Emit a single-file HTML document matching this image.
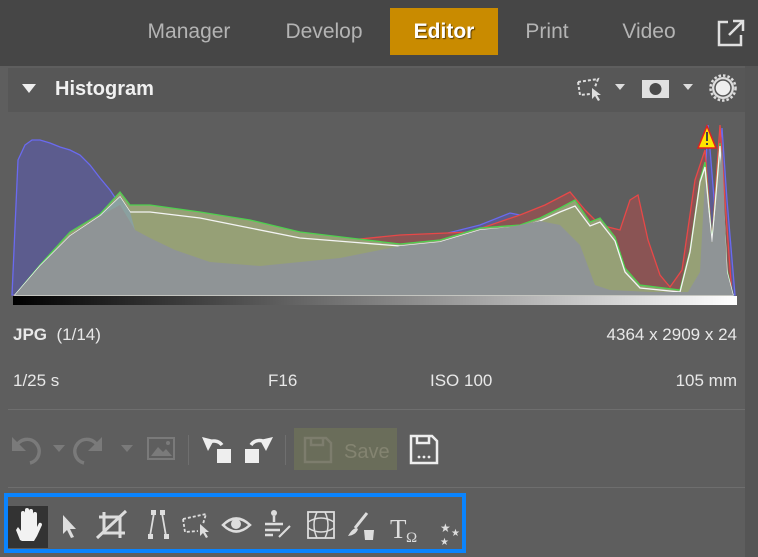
<!DOCTYPE html>
<html><head><meta charset="utf-8"><style>
*{margin:0;padding:0;box-sizing:border-box}
body{width:758px;height:557px;overflow:hidden;background:#5e5e5e;font-family:"Liberation Sans",sans-serif;position:relative;color:#e6e6e6}
.abs{position:absolute}
.top{left:0;top:0;width:758px;height:66px;background:#464646}
.tab{position:absolute;top:8px;height:47px;line-height:47px;font-size:21px;color:#b4b4b4;text-align:center}
.hdr{left:8px;top:68px;width:737px;height:44px;background:#575757}
.txt{font-size:17px;color:#e8e8e8;position:absolute}
</style></head><body>
<div class="abs top"></div>
<div class="tab" style="left:140px;width:98px">Manager</div>
<div class="tab" style="left:279px;width:90px">Develop</div>
<div class="tab" style="left:390px;width:108px;background:#c98b00;color:#fff;font-weight:bold;text-shadow:1px 1px 1px #5a3c00">Editor</div>
<div class="tab" style="left:518px;width:58px">Print</div>
<div class="tab" style="left:615px;width:68px">Video</div>
<svg class="abs" style="left:716px;top:18px" width="30" height="30" viewBox="0 0 30 30" fill="none" stroke="#e0e0e0" stroke-width="2.5"><path d="M12 4H3V27H25V17"/><path d="M13 17L26 4M17 3H27V13"/></svg>
<div class="abs" style="left:745px;top:66px;width:13px;height:491px;background:#555"></div>
<div class="abs hdr"></div>
<svg class="abs" style="left:22px;top:84px" width="14" height="10"><path d="M0 0H14L7 9Z" fill="#eee"/></svg>
<div class="abs" style="left:55px;top:78px;font-size:20px;font-weight:bold;color:#f0f0f0">Histogram</div>
<svg class="abs" style="left:575px;top:74px" width="165" height="30" viewBox="0 0 165 30" fill="none">
<path d="M3 8L23 5L20 13M3 8L5 21L15 20" stroke="#ddd" stroke-width="2" stroke-dasharray="3 2"/>
<path d="M17 14L17 25L20 22L23 27L25 26L22 21L26 21Z" fill="#ddd"/>
<path d="M40 10H50L45 16Z" fill="#ddd"/>
<rect x="67" y="6" width="27" height="18" fill="#e0e0e0"/><circle cx="80.5" cy="15" r="6" fill="#4a4a4a"/>
<path d="M108 10H118L113 16Z" fill="#ddd"/>
<circle cx="148" cy="14" r="11" fill="#ddd"/><circle cx="148" cy="14" r="12.5" stroke="#ddd" stroke-width="2.5" stroke-dasharray="2.5 2"/><circle cx="148" cy="14" r="8" fill="#eee" stroke="#555" stroke-width="1.5"/>
</svg>
<svg class="abs" style="left:0;top:110px" width="745" height="200" viewBox="0 110 745 200">
<rect x="8" y="112" width="737" height="194" fill="#5e5e5e"/>
<path d="M12 295L18 160L25 145L32 140L40 140L50 143L60 147L70 150L80 155L90 165L100 178L110 190L120 205L135 230L150 238L175 250L210 262L260 266L300 262L340 258L400 245L440 235L480 225L510 213L520 215L545 218L565 232L580 245L595 285L610 290L650 292L690 292L700 270L708 125L715 210L722 128L727 200L735 295Z" fill="#5c5c8e" stroke="#6a6af0" stroke-width="1.3"/>
<path d="M15 295L50 265L100 225L130 210L150 225L200 235L250 240L300 245L400 235L470 232L520 215L545 205L570 192L585 210L600 225L620 230L630 200L638 195L648 240L660 275L670 287L682 270L695 180L705 150L712 240L720 125L725 200L732 295Z" fill="#8a5454" stroke="#e84848" stroke-width="1.3"/>
<path d="M15 295L40 265L70 232L100 214L120 192L130 205L150 205L200 212L250 220L300 232L350 238L400 244L440 240L480 228L520 225L540 218L560 208L575 200L590 222L600 218L615 237L625 268L640 285L680 290L690 250L700 180L705 162L712 240L720 143L727 270L733 295Z" fill="#96a076" stroke="#4ed04e" stroke-width="1.3"/>
<path d="M15 295L40 266L70 236L100 216L120 197L130 212L150 212L200 218L250 228L300 238L350 242L400 246L440 242L480 230L520 227L540 221L560 212L575 206L590 226L600 222L615 241L625 272L640 288L680 292L690 252L700 182L705 167L712 242L720 146L727 272L733 295Z" fill="none" stroke="#f4f4f4" stroke-width="1.3"/>
<path d="M15 295L40 266L70 236L100 216L120 205L135 230L150 238L175 250L210 262L260 266L300 262L340 258L400 246L440 242L480 230L510 227L540 221L560 225L580 245L595 285L610 290L650 292L688 292L700 272L705 180L712 244L722 146L727 272L733 295Z" fill="#8f9496"/>
<path d="M100 216L120 197L130 212L135 230L120 205Z" fill="#8aa0a0"/>
<path d="M707 126L698 148H716Z" fill="#ffe600" stroke="#e02020" stroke-width="1.5"/>
<rect x="706" y="132" width="2" height="9" fill="#444"/><rect x="706" y="143" width="2" height="2" fill="#444"/>
<defs><linearGradient id="g"><stop offset="0" stop-color="#000"/><stop offset="1" stop-color="#fff"/></linearGradient></defs>
<rect x="13" y="296" width="724" height="9" fill="url(#g)"/>
</svg>
<div class="txt" style="left:13px;top:325px"><b>JPG</b>&nbsp;&nbsp;(1/14)</div>
<div class="txt" style="right:21px;top:325px">4364 x 2909 x 24</div>
<div class="txt" style="left:13px;top:371px">1/25 s</div>
<div class="txt" style="left:268px;top:371px">F16</div>
<div class="txt" style="left:430px;top:371px">ISO 100</div>
<div class="txt" style="right:21px;top:371px">105 mm</div>
<div class="abs" style="left:8px;top:409px;width:737px;height:1px;background:#6e6e6e"></div>
<svg class="abs" style="left:8px;top:425px" width="440" height="50" viewBox="0 0 440 50" fill="none">
<g stroke="#7a7a7a" stroke-width="3.5"><path d="M8 22A12 12 0 1 1 22 38"/><path d="M90 22A12 12 0 1 0 76 38"/></g>
<path d="M4 12V26H18Z" fill="#7a7a7a"/><path d="M94 12V26H80Z" fill="#7a7a7a"/>
<path d="M45 20H57L51 27Z M113 20H125L119 27Z" fill="#7a7a7a"/>
<rect x="140" y="13" width="26" height="21" stroke="#7a7a7a" stroke-width="2"/><path d="M143 31L150 22L155 27L158 24L164 31Z" fill="#7a7a7a"/><circle cx="160" cy="18" r="2" fill="#7a7a7a"/>
<rect x="180" y="10" width="1" height="30" fill="#6f6f6f"/>
<path d="M214 20A10 10 0 0 0 200 18" stroke="#eee" stroke-width="3.5"/><path d="M194 12L200 26L206 15Z" fill="#eee"/><rect x="209" y="24" width="14" height="14" fill="#eee"/>
<path d="M243 20A10 10 0 0 1 258 18" stroke="#eee" stroke-width="3.5"/><path d="M265 12L258 26L252 15Z" fill="#eee"/><rect x="237" y="24" width="14" height="14" fill="#eee"/>
<rect x="277" y="10" width="1" height="30" fill="#6f6f6f"/>
<rect x="286" y="3" width="103" height="42" fill="#6a6d5a"/>
<path d="M297 13H318L323 18V37H297Z M303 13V20H315V13" stroke="#7d7d6d" stroke-width="2.5"/>
<text x="336" y="33" font-size="20" fill="#848471" font-family="Liberation Sans" stroke="none">Save</text>
<path d="M403 11H424L429 16V38H403Z M409 11V18H421V11" stroke="#eee" stroke-width="2.5"/>
<circle cx="411" cy="32" r="1.4" fill="#eee"/><circle cx="416" cy="32" r="1.4" fill="#eee"/><circle cx="421" cy="32" r="1.4" fill="#eee"/>
</svg>
<div class="abs" style="left:8px;top:487px;width:737px;height:1px;background:#6e6e6e"></div>
<div class="abs" style="left:4px;top:493px;width:462px;height:60px;border:4px solid #0a84ff"></div>
<div class="abs" style="left:8px;top:506px;width:40px;height:42px;background:#333"></div>
<svg class="abs" style="left:8px;top:500px" width="455" height="50" viewBox="0 0 455 50" fill="none">
<path d="M12 40L8 30L10 27L13 31V13A2 2 0 0 1 17 13V24V10A2 2 0 0 1 21 10V24V11A2 2 0 0 1 25 11V24V14A2 2 0 0 1 29 14V27L31 23A2 2 0 0 1 34 25L29 36L26 41H14Z" fill="#f2f2f2"/>
<path d="M55 15L55 34L59 30L63 38L66 37L62 29L68 29Z" fill="#ddd"/>
<g stroke="#ddd" stroke-width="3"><path d="M96 12V33H117M91 17H112V38M89 38L118 11"/></g>
<g stroke="#ddd" stroke-width="1.8"><path d="M146 13L142 36M154 13L158 36"/></g>
<g fill="#ddd"><rect x="143" y="10" width="5" height="5"/><rect x="140" y="34" width="5" height="5"/><rect x="152" y="10" width="5" height="5"/><rect x="156" y="34" width="5" height="5"/></g>
<path d="M175 19L198 14L195 24M175 19L177 32L190 31" stroke="#ddd" stroke-width="1.8" stroke-dasharray="3 2"/>
<path d="M192 24L192 36L195 33L198 38L200 37L197 32L201 32Z" fill="#ddd"/>
<path d="M215 25Q228 12 242 25Q228 38 215 25Z" stroke="#ddd" stroke-width="2.5"/><circle cx="228" cy="24" r="5" fill="#ddd"/>
<circle cx="266" cy="13" r="3" fill="#ddd"/><path d="M266 16V22M257 24H275M257 30H272M257 35H265" stroke="#ddd" stroke-width="2.5"/><path d="M282 26L271 37" stroke="#ddd" stroke-width="2"/>
<rect x="300" y="12" width="26" height="26" stroke="#ddd" stroke-width="1.8"/><path d="M300 22Q313 14 326 22M300 28Q313 36 326 28M309 12Q303 25 309 38M317 12Q323 25 317 38" stroke="#ddd" stroke-width="1.5"/>
<path d="M359 13L347 28" stroke="#ddd" stroke-width="3"/><path d="M340 36Q346 26 350 29Q348 35 340 36Z" fill="#ddd"/><path d="M356 30H366L365 40H357Z" fill="#ddd"/>
<text x="382" y="38" font-family="Liberation Serif" font-size="27" fill="#ddd">T</text><text x="398" y="42" font-family="Liberation Serif" font-size="15" fill="#ddd">Ω</text>
<text x="432" y="32" font-size="12" fill="#ddd">★</text><text x="443" y="36" font-size="10" fill="#ddd">★</text><text x="432" y="45" font-size="10" fill="#ddd">★</text>
</svg>
</body></html>
